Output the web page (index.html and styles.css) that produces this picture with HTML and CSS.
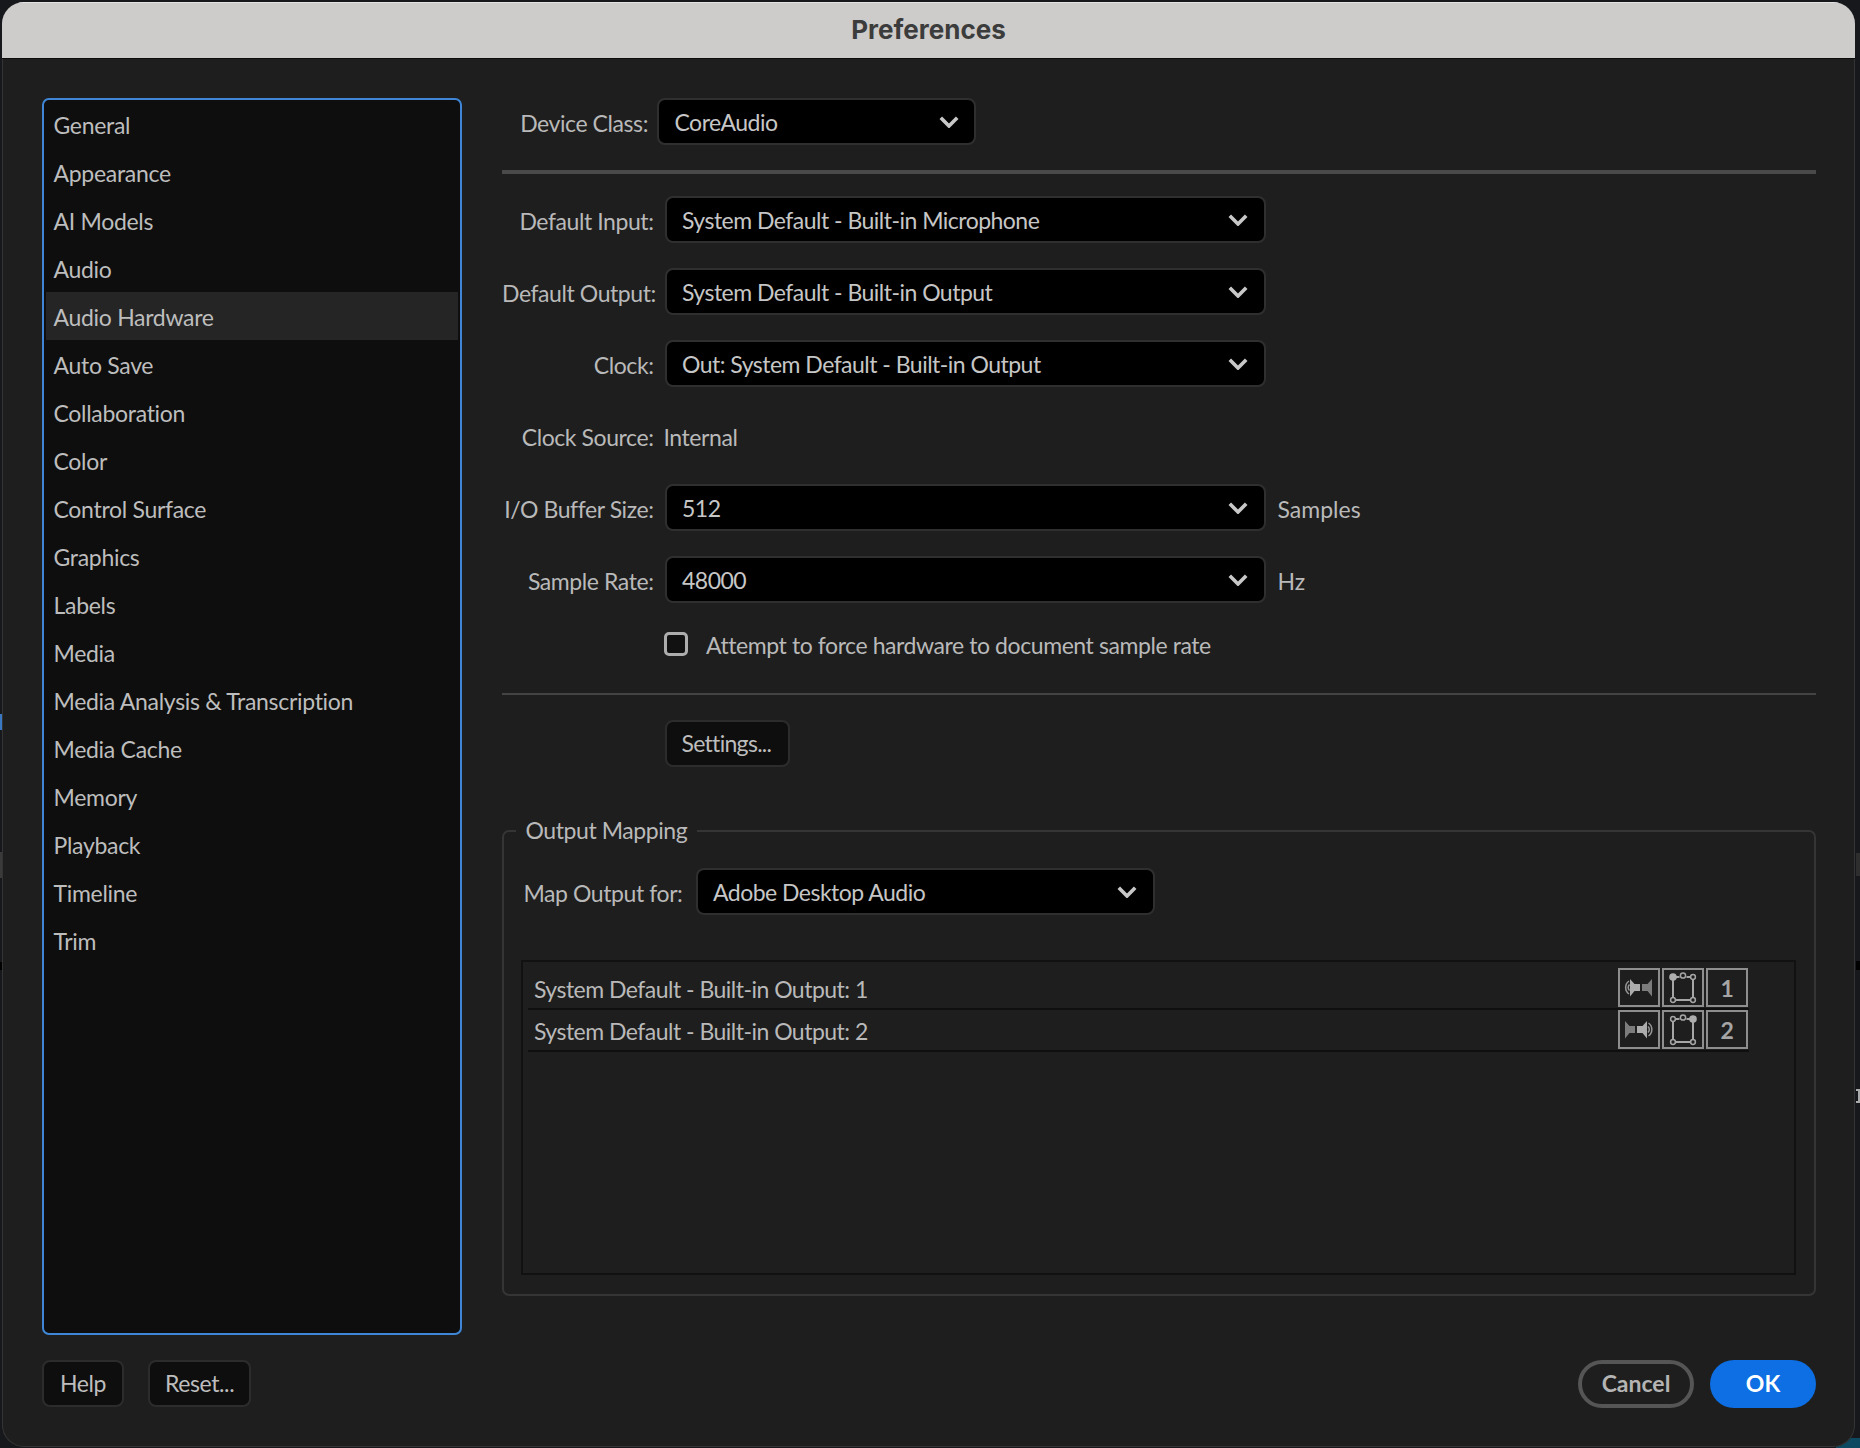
FILE: index.html
```html
<!DOCTYPE html>
<html lang="en">
<head>
<meta charset="utf-8">
<title>Preferences</title>
<link rel="stylesheet" href="styles.css">
</head>
<body>
<svg class="defs" width="0" height="0" aria-hidden="true">
  <defs>
    <symbol id="chev" viewBox="0 0 20 12"><path d="M1.800 1.800 10 10 18.200 1.800" fill="none" stroke="currentColor" stroke-width="3.600"/></symbol>
    <symbol id="spk1" viewBox="0 0 38 35">
      <path d="M9 11A8 8 0 0 0 9 24M9.500 14.500A4.500 4.500 0 0 0 9.500 20.500" fill="none" stroke="#959595" stroke-width="1.500"/>
      <path d="M10 9 14.500 14H20V21H14.500L10 26.500Z" fill="#adadad"/>
      <path d="M32 9 27.500 14H22V21H27.500L32 26.500Z" fill="#7c7c7c"/>
    </symbol>
    <symbol id="spk2" viewBox="0 0 38 35">
      <path d="M5 9 9.500 14H15V21H9.500L5 26.500Z" fill="#7c7c7c"/>
      <path d="M27 9 22.500 14H17V21H22.500L27 26.500Z" fill="#adadad"/>
      <path d="M28.500 11A8 8 0 0 1 28.500 24M28 14.500A4.500 4.500 0 0 1 28 20.500" fill="none" stroke="#959595" stroke-width="1.500"/>
    </symbol>
    <symbol id="frame1" viewBox="0 0 38 35">
      <path d="M9 7H15.500M22.500 7H29M29 9V28M27 30H11M9 28V9" fill="none" stroke="#a6a6a6" stroke-width="2"/>
      <circle cx="19" cy="5.500" r="2.600" fill="none" stroke="#a6a6a6" stroke-width="1.500"/>
      <circle cx="29" cy="7" r="2.400" fill="#1e1e1e" stroke="#a6a6a6" stroke-width="1.500"/>
      <circle cx="9" cy="30" r="2.400" fill="#1e1e1e" stroke="#a6a6a6" stroke-width="1.500"/>
      <circle cx="29" cy="30" r="2.400" fill="#1e1e1e" stroke="#a6a6a6" stroke-width="1.500"/>
      <circle cx="9" cy="7" r="3.800" fill="#adadad"/>
    </symbol>
    <symbol id="frame2" viewBox="0 0 38 35">
      <path d="M9 7H15.500M22.500 7H29M29 9V28M27 30H11M9 28V9" fill="none" stroke="#a6a6a6" stroke-width="2"/>
      <circle cx="19" cy="5.500" r="2.600" fill="none" stroke="#a6a6a6" stroke-width="1.500"/>
      <circle cx="9" cy="7" r="2.400" fill="#1e1e1e" stroke="#a6a6a6" stroke-width="1.500"/>
      <circle cx="9" cy="30" r="2.400" fill="#1e1e1e" stroke="#a6a6a6" stroke-width="1.500"/>
      <circle cx="29" cy="30" r="2.400" fill="#1e1e1e" stroke="#a6a6a6" stroke-width="1.500"/>
      <circle cx="29" cy="7" r="3.800" fill="#adadad"/>
    </symbol>
  </defs>
</svg>
<span class="peek peek-blue"></span>
<span class="peek peek-gray-left"></span>
<span class="peek peek-black-left"></span>
<span class="peek peek-gray-right"></span>
<span class="peek peek-black-right"></span>
<span class="peek peek-light-right"></span>
<span class="peek peek-teal"></span>
<div class="window">
  <header class="titlebar">Preferences</header>
  <div class="content">
    <div class="panes">
      <ul class="categories">
        <li>General</li>
        <li>Appearance</li>
        <li>AI Models</li>
        <li>Audio</li>
        <li class="selected">Audio Hardware</li>
        <li>Auto Save</li>
        <li>Collaboration</li>
        <li>Color</li>
        <li>Control Surface</li>
        <li>Graphics</li>
        <li>Labels</li>
        <li>Media</li>
        <li>Media Analysis &amp; Transcription</li>
        <li>Media Cache</li>
        <li>Memory</li>
        <li>Playback</li>
        <li>Timeline</li>
        <li>Trim</li>
      </ul>
      <main class="settings">
        <div class="device-row">
          <span class="label device-label">Device Class:</span>
          <div class="select device-select"><span>CoreAudio</span><svg class="chevron"><use href="#chev"/></svg></div>
        </div>
        <hr class="rule-thick">
        <div class="form-row">
          <span class="label">Default Input:</span>
          <div class="select wide"><span>System Default - Built-in Microphone</span><svg class="chevron"><use href="#chev"/></svg></div>
        </div>
        <div class="form-row">
          <span class="label">Default Output:</span>
          <div class="select wide"><span>System Default - Built-in Output</span><svg class="chevron"><use href="#chev"/></svg></div>
        </div>
        <div class="form-row">
          <span class="label">Clock:</span>
          <div class="select wide"><span>Out: System Default - Built-in Output</span><svg class="chevron"><use href="#chev"/></svg></div>
        </div>
        <div class="form-row">
          <span class="label">Clock Source:</span>
          <span class="static">Internal</span>
        </div>
        <div class="form-row">
          <span class="label">I/O Buffer Size:</span>
          <div class="select wide"><span>512</span><svg class="chevron"><use href="#chev"/></svg></div>
          <span class="unit">Samples</span>
        </div>
        <div class="form-row">
          <span class="label">Sample Rate:</span>
          <div class="select wide"><span>48000</span><svg class="chevron"><use href="#chev"/></svg></div>
          <span class="unit">Hz</span>
        </div>
        <div class="check-row"><span class="checkbox"></span><span class="check-text">Attempt to force hardware to document sample rate</span></div>
        <hr class="rule-thin">
        <div class="settings-row"><button class="btn">Settings...</button></div>
        <section class="mapping">
          <span class="legend">Output Mapping</span>
          <div class="map-row">
            <span class="map-label">Map Output for:</span>
            <div class="select map-select"><span>Adobe Desktop Audio</span><svg class="chevron"><use href="#chev"/></svg></div>
          </div>
          <div class="channels">
            <div class="channel">
              <span class="channel-name">System Default - Built-in Output: 1</span>
              <span class="cell"><svg class="glyph"><use href="#spk1"/></svg></span>
              <span class="cell"><svg class="glyph"><use href="#frame1"/></svg></span>
              <span class="cell">1</span>
            </div>
            <div class="channel">
              <span class="channel-name">System Default - Built-in Output: 2</span>
              <span class="cell"><svg class="glyph"><use href="#spk2"/></svg></span>
              <span class="cell"><svg class="glyph"><use href="#frame2"/></svg></span>
              <span class="cell">2</span>
            </div>
          </div>
        </section>
      </main>
    </div>
    <footer class="footer">
      <div class="footer-left">
        <button class="btn help">Help</button>
        <button class="btn reset">Reset...</button>
      </div>
      <div class="footer-right">
        <button class="pill cancel">Cancel</button>
        <button class="pill ok">OK</button>
      </div>
    </footer>
  </div>
</div>
</body>
</html>
```
FILE: styles.css
```css
* { box-sizing: border-box; }
html, body { margin: 0; padding: 0; }
body {
  position: relative;
  width: 1860px;
  height: 1448px;
  overflow: hidden;
  background: #17181b;
  padding: 2px 5px 1px 2px;
  font-family: Lato, "Open Sans", sans-serif;
  font-size: 23px;
  color: #b9b9b9;
}
.defs { position: absolute; }
.peek { position: absolute; display: block; }
.peek-blue { left: 0; top: 714px; width: 2px; height: 16px; background: #3a78c4; }
.peek-gray-left { left: 0; top: 852px; width: 2px; height: 26px; background: #3a3a3a; }
.peek-black-left { left: 0; top: 962px; width: 2px; height: 8px; background: #000; }
.peek-gray-right { left: 1856px; top: 853px; width: 4px; height: 23px; background: #2e2e2e; }
.peek-black-right { left: 1856px; top: 961px; width: 4px; height: 9px; background: #000; }
.peek-light-right { left: 1856px; top: 1089px; width: 4px; height: 14px; border: 2px solid #aaa; border-left: 0; }
.peek-teal { left: 1836px; top: 1438px; width: 24px; height: 10px; background: #0d4a62; }
.window {
  position: relative;
  height: 1445px;
  background: #1e1e1e;
  border-radius: 22px;
  overflow: hidden;
  display: flex;
  flex-direction: column;
  box-shadow: inset 0 0 0 1px #343434;
}
.titlebar {
  height: 57px;
  flex: none;
  background: #cdccca;
  border-top: 1px solid #e4e3e1;
  border-bottom: 1px solid #0c0c0c;
  color: #3c3c3c;
  font-family: Inter, sans-serif;
  font-weight: 700;
  font-size: 26px;
  text-align: center;
  line-height: 53px;
}
.content {
  flex: 1;
  display: flex;
  flex-direction: column;
  padding: 39px 39px 0 40px;
}
.panes {
  display: flex;
  gap: 40px;
  height: 1237px;
}
.categories {
  list-style: none;
  margin: 0;
  width: 420px;
  flex: none;
  padding: 0 2px;
  background: #0e0e0e;
  border: 2px solid #3f87d6;
  border-radius: 7px;
  letter-spacing: -0.3px;
}
.categories li {
  height: 48px;
  line-height: 50px;
  padding-left: 7.500px;
  color: #bdbdbd;
}
.categories li.selected { background: #252525; }
.settings {
  flex: 1;
  min-width: 0;
  display: flex;
  flex-direction: column;
  letter-spacing: -0.42px;
}
.select {
  height: 47px;
  display: flex;
  align-items: center;
  justify-content: space-between;
  background: #000;
  border: 2px solid #2f2f2f;
  border-radius: 8px;
  padding: 0 15.500px 0 15.500px;
  color: #c6c6c6;
  letter-spacing: -0.52px;
}
.chevron { width: 20px; height: 12px; color: #c8c8c8; }
.device-row {
  display: flex;
  align-items: center;
  height: 47px;
}
.label {
  width: 151.500px;
  margin-right: 11px;
  flex: none;
  text-align: right;
  padding-top: 2px;
  white-space: nowrap;
}
.label.device-label { width: 146px; margin-right: 9px; }
.device-select { width: 319px; }
.rule-thick {
  margin: 25px 0 22px;
  height: 4px;
  border: 0;
  background: #4a4a4a;
}
.form-row {
  display: flex;
  align-items: center;
  height: 47px;
  margin-bottom: 25px;
}
.static { padding-top: 2px; margin-left: -1px; }
.wide { width: 601px; }
.unit { margin-left: 12px; padding-top: 2px; letter-spacing: 0; }
.check-row {
  display: flex;
  align-items: center;
  gap: 18px;
  height: 24px;
  margin: 4px 0 0 162px;
}
.check-text { padding-top: 2px; }
.checkbox {
  width: 24px;
  height: 24px;
  background: #111;
  border: 3.500px solid #adadad;
  border-radius: 5px;
}
.rule-thin {
  margin: 37px 0 25px;
  height: 2px;
  border: 0;
  background: #444;
}
.settings-row { padding-left: 162.500px; }
.btn {
  height: 47px;
  background: #0e0e0e;
  border: 2px solid #2c2c2c;
  border-radius: 8px;
  font: inherit;
  letter-spacing: -0.4px;
  color: #bdbdbd;
  padding: 0 15px 2px;
}
.settings-row .btn { width: 125px; text-align: left; letter-spacing: -0.7px; }
.mapping {
  position: relative;
  margin-top: 63px;
  height: 466px;
  border: 2px solid #353535;
  border-radius: 7px;
  padding: 36px 18px 0 17px;
}
.legend {
  position: absolute;
  top: -17px;
  left: 11.500px;
  padding: 0 10px;
  background: #1e1e1e;
  line-height: 30px;
}
.map-row {
  display: flex;
  align-items: center;
  gap: 17px;
  margin-left: 2.500px;
}
.map-label { width: 155px; flex: none; white-space: nowrap; padding-top: 2px; }
.map-select { width: 459px; }
.channels {
  height: 315px;
  margin-top: 45px;
  border: 2px solid #111;
  padding: 6px 45px 0 5px;
  letter-spacing: -0.52px;
}
.channel {
  display: flex;
  align-items: flex-start;
  gap: 2px;
  height: 42px;
  padding-right: 1px;
  border-bottom: 2px solid #0f0f0f;
}
.channel-name { flex: 1; padding-left: 6px; line-height: 43px; }
.cell {
  width: 42px;
  height: 39px;
  display: flex;
  align-items: center;
  justify-content: center;
  border: 2px solid #8e8e8e;
  font-size: 23px;
  font-weight: 700;
  color: #a5a5a5;
}
.glyph { width: 38px; height: 35px; }
.footer {
  display: flex;
  justify-content: space-between;
  margin-top: 25px;
}
.footer-left { display: flex; gap: 24px; }
.help { width: 82px; }
.reset { width: 103px; }
.footer-right { display: flex; gap: 16px; }
.pill {
  height: 48px;
  border-radius: 24px;
  font: inherit;
  font-weight: 700;
  padding: 0 0 2px;
}
.cancel {
  width: 116px;
  background: #1e1e1e;
  border: 4px solid #555;
  color: #b4b4b4;
}
.ok {
  width: 106px;
  background: #0d6fe3;
  border: 0;
  color: #fff;
}
```
